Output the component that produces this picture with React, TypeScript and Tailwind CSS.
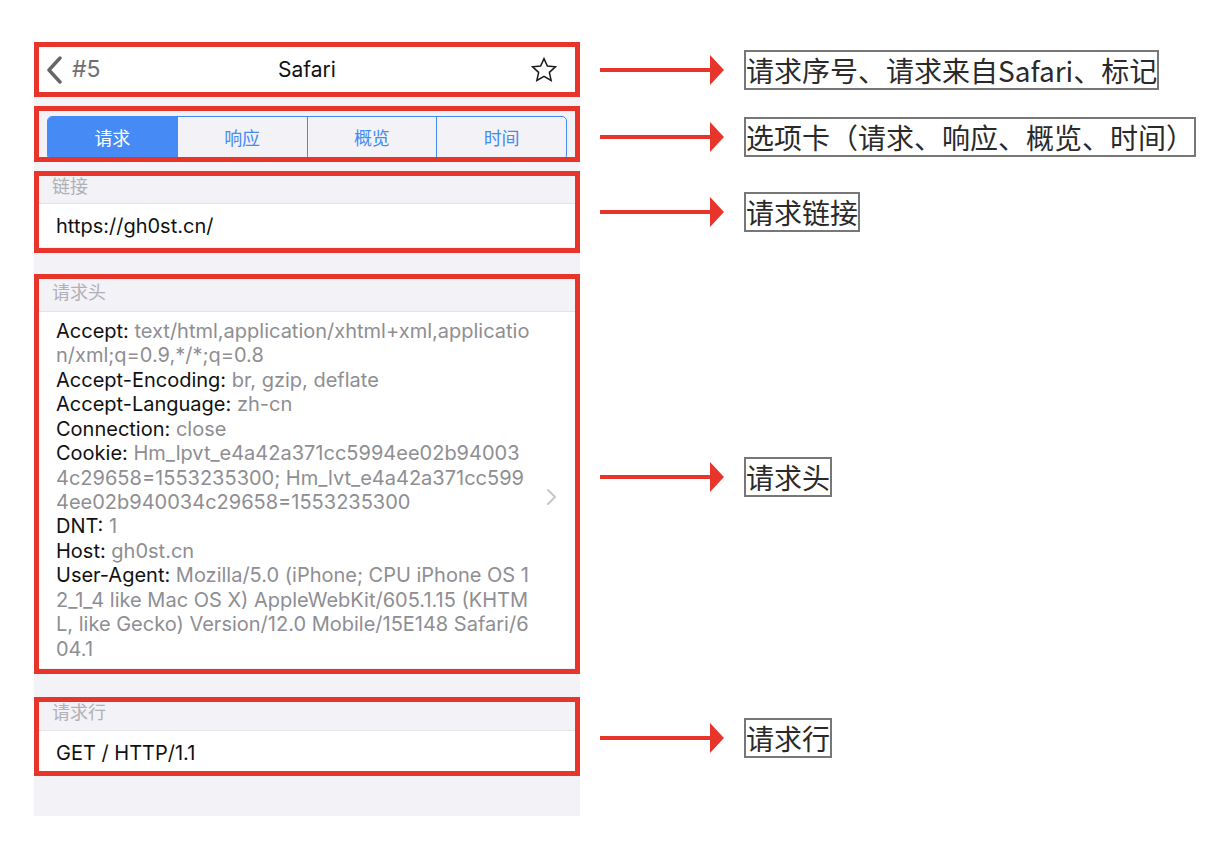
import React from "react";

const RED = "border-[#e8352b]";

function Arrow() {
  return (
    <div className="flex items-center ml-[20px]">
      <div className="w-[110px] h-[4px] bg-[#e8352b]" />
      <svg width="14" height="30" viewBox="0 0 14 30" className="block">
        <polygon points="0,0 14,15 0,30" fill="#e8352b" />
      </svg>
    </div>
  );
}

function Label({ text, extra = "" }: { text: string; extra?: string }) {
  return (
    <div
      className={`ml-[20px] border-2 border-[#777777] text-[28px] leading-[36px] text-[#2a2a2a] whitespace-nowrap ${extra}`}
      style={{ fontFamily: '"Noto Sans CJK SC", "Noto Sans", sans-serif' }}
    >
      {text}
    </div>
  );
}

function Row({
  children,
  label,
  labelExtra,
  annClass = "",
}: {
  children: React.ReactNode;
  label?: string;
  labelExtra?: string;
  annClass?: string;
}) {
  return (
    <div className="flex items-center">
      <div className="w-[546px] bg-[#f2f2f7] shrink-0">{children}</div>
      {label && (
        <div className={`flex items-center ${annClass}`}>
          <Arrow />
          <Label text={label} extra={labelExtra} />
        </div>
      )}
    </div>
  );
}

function Gap({ h }: { h: string }) {
  return <div className={`w-[546px] bg-[#f2f2f7] ${h}`} />;
}

const headerLines: [string, string][] = [
  ["Accept: ", "text/html,application/xhtml+xml,applicatio"],
  ["", "n/xml;q=0.9,*/*;q=0.8"],
  ["Accept-Encoding: ", "br, gzip, deflate"],
  ["Accept-Language: ", "zh-cn"],
  ["Connection: ", "close"],
  ["Cookie: ", "Hm_lpvt_e4a42a371cc5994ee02b94003"],
  ["", "4c29658=1553235300; Hm_lvt_e4a42a371cc599"],
  ["", "4ee02b940034c29658=1553235300"],
  ["DNT: ", "1"],
  ["Host: ", "gh0st.cn"],
  ["User-Agent: ", "Mozilla/5.0 (iPhone; CPU iPhone OS 1"],
  ["", "2_1_4 like Mac OS X) AppleWebKit/605.1.15 (KHTM"],
  ["", "L, like Gecko) Version/12.0 Mobile/15E148 Safari/6"],
  ["", "04.1"],
];

export default function App() {
  return (
    <div
      className="min-h-screen bg-white pt-[42px] pl-[34px] flex flex-col"
      style={{ fontFamily: 'Inter, "Noto Sans CJK SC", sans-serif' }}
    >
      {/* Nav bar */}
      <Row label="请求序号、请求来自Safari、标记">
        <div className={`h-[55px] border-[5px] ${RED} bg-white`}>
          <div className="h-full grid grid-cols-[1fr_auto_1fr] items-center">
            <div className="flex items-center pl-[7px]">
              <svg width="18" height="28" viewBox="0 0 18 28" className="block">
                <path
                  d="M14 2 L3 14 L14 26"
                  fill="none"
                  stroke="#666666"
                  strokeWidth="3.4"
                  strokeLinecap="round"
                  strokeLinejoin="round"
                />
              </svg>
              <span className="ml-[8px] text-[23px] text-[#707070] leading-none">#5</span>
            </div>
            <div className="text-[21px] text-[#111111] leading-none">Safari</div>
            <div className="flex justify-end pr-[17px]">
              <svg width="28" height="28" viewBox="0 0 24 24" className="block">
                <path
                  d="M12 2.2 L14.9 8.6 L21.8 9.3 L16.6 14 L18.1 20.9 L12 17.4 L5.9 20.9 L7.4 14 L2.2 9.3 L9.1 8.6 Z"
                  fill="none"
                  stroke="#1a1a1a"
                  strokeWidth="1.3"
                  strokeLinejoin="miter"
                />
              </svg>
            </div>
          </div>
        </div>
      </Row>
      <Gap h="h-[9px]" />

      {/* Segmented */}
      <Row label="选项卡（请求、响应、概览、时间）" annClass="mt-[5px]">
        <div className={`h-[56px] border-[5px] ${RED} overflow-hidden`}>
          <div className="pt-[5px] px-[8px]">
            <div className="h-[44px] flex rounded-[5px] border border-[#468bf5] overflow-hidden text-[18px] text-[#468bf5]">
              <div className="flex-1 bg-[#468bf5] text-white flex items-center justify-center">请求</div>
              <div className="flex-1 border-l border-[#468bf5] flex items-center justify-center">响应</div>
              <div className="flex-1 border-l border-[#468bf5] flex items-center justify-center">概览</div>
              <div className="flex-1 border-l border-[#468bf5] flex items-center justify-center">时间</div>
            </div>
          </div>
        </div>
      </Row>
      <Gap h="h-[9px]" />

      {/* Link */}
      <Row label="请求链接">
        <div className={`h-[82px] border-[5px] ${RED}`}>
          <div className="h-[28px] border-b border-[#e3e3e8] pl-[13px] text-[18px] leading-[22px] text-[#b0b0b5]">
            链接
          </div>
          <div className="h-[43px] bg-white flex items-center pl-[17px] text-[20px] text-[#111111]">
            https://gh0st.cn/
          </div>
        </div>
      </Row>
      <Gap h="h-[21px]" />

      {/* Headers */}
      <Row label="请求头" annClass="mt-[6px]">
        <div className={`h-[400px] border-[5px] ${RED}`}>
          <div className="h-[33px] border-b border-[#e3e3e8] pl-[13px] pt-[3px] text-[18px] leading-[22px] text-[#b0b0b5]">
            请求头
          </div>
          <div className="h-[356px] bg-white flex items-center pl-[17px] pr-[18px]">
            <div className="flex-1 text-[20px] leading-[24.45px]">
              {headerLines.map(([k, v], i) => (
                <div key={i} className="whitespace-nowrap">
                  {k && <span className="text-[#111111]">{k}</span>}
                  <span className="text-[#8e8e93]">{v}</span>
                </div>
              ))}
            </div>
            <svg width="12" height="18" viewBox="0 0 12 18" className="block shrink-0 mt-[14px]">
              <path
                d="M3 2 L10 9 L3 16"
                fill="none"
                stroke="#c7c7cc"
                strokeWidth="2"
                strokeLinecap="round"
                strokeLinejoin="round"
              />
            </svg>
          </div>
        </div>
      </Row>
      <Gap h="h-[23px]" />

      {/* Request line */}
      <Row label="请求行" annClass="mt-[3px]">
        <div className={`h-[79px] border-[5px] ${RED}`}>
          <div className="h-[29px] border-b border-[#e3e3e8] pl-[13px] text-[18px] leading-[22px] text-[#b0b0b5]">
            请求行
          </div>
          <div className="h-[40px] bg-white flex items-center pl-[17px] pt-[4px] text-[20px] text-[#111111]">
            GET / HTTP/1.1
          </div>
        </div>
      </Row>
      <Gap h="h-[40px]" />
    </div>
  );
}
